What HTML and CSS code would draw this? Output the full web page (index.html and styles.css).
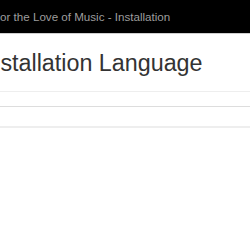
FILE: index.html
```html
<!DOCTYPE html>
<html lang="en">
<head>
    <meta charset="UTF-8">
    <title>For the Love of Music - Installation</title>
    <link rel="stylesheet" href="styles.css">
</head>
<body>
    <!-- Top bar -->
    <div class="navbar">
        <span class="brand">For the Love of Music - Installation</span>
    </div>

    <div class="container">
        <div class="page-header">
            <h1>Installation Language</h1>
        </div>
        <div class="row-line"></div>
        <div class="row-thick"></div>
    </div>
</body>
</html>
```
FILE: styles.css
```css
body {
    margin: 0;
    font-family: "Liberation Sans", Arial, sans-serif;
    color: #333333;
    background-color: #ffffff;
    overflow: hidden;
}
.navbar {
    background-color: #000000;
    height: 33px;
    border-bottom: 1px solid #cfcfcf;
    display: flex;
    align-items: center;
}
.brand {
    color: #9d9d9d;
    font-size: 11.6px;
    margin-left: -7px;
    white-space: nowrap;
}
.container {
    margin-left: -19px;
}
.page-header {
    border-bottom: 1px solid #eeeeee;
    padding: 16px 0 14px;
}
h1 {
    margin: 0;
    font-size: 23.3px;
    font-weight: normal;
    white-space: nowrap;
}
.row-line {
    height: 14px;
    border-bottom: 1px solid #dddddd;
}
.row-thick {
    height: 19px;
    border-bottom: 2px solid #eeeeee;
}
```
